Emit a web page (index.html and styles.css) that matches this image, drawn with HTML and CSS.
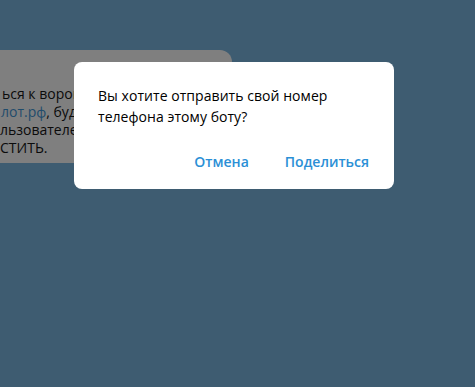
FILE: index.html
```html
<!DOCTYPE html>
<html lang="ru">
<head>
    <meta charset="UTF-8">
    <meta name="viewport" content="width=device-width, initial-scale=1.0">
    <title>Поделиться номером</title>
    <link rel="stylesheet" href="styles.css">
</head>
<body>
    <div class="chat">
        <div class="bubble">
            <div class="line l1">ься к воронке</div>
            <div class="line l2"><span class="link">лот.рф</span>, будет</div>
            <div class="line l3">льзователей</div>
            <div class="line l4">СТИТЬ.</div>
        </div>
    </div>

    <div class="dialog">
        <p class="dialog-text">Вы хотите отправить свой номер<br>телефона этому боту?</p>
        <div class="dialog-buttons">
            <button class="dialog-btn">Отмена</button>
            <button class="dialog-btn">Поделиться</button>
        </div>
    </div>
</body>
</html>
```

FILE: styles.css
```css
body {
    margin: 0;
    height: 387px;
    background-color: #3e5c71;
    font-family: "Open Sans", "DejaVu Sans", sans-serif;
    overflow: hidden;
    position: relative;
}
.chat {
    padding-top: 50px;
}
.bubble {
    width: 232px;
    box-sizing: border-box;
    padding: 35px 0 6px 0;
    background-color: #7f7f7f;
    border-radius: 0 12px 12px 0;
    color: #0b0b0b;
    font-size: 14px;
    line-height: 18px;
    overflow: hidden;
}
.line {
    white-space: nowrap;
}
.l1 { margin-left: 2px; }
.l2 { margin-left: 1px; }
.l3 { margin-left: 0; }
.l4 { margin-left: 0; }
.link {
    color: #1f4c6c;
}
.dialog {
    position: absolute;
    left: 74px;
    top: 62px;
    width: 320px;
    height: 127px;
    box-sizing: border-box;
    padding: 23px 25px 0 24px;
    background-color: #fff;
    border-radius: 8px;
}
.dialog-text {
    margin: 0;
    font-size: 14px;
    line-height: 21px;
    letter-spacing: 0.05px;
    color: #000;
}
.dialog-buttons {
    display: flex;
    justify-content: flex-end;
    gap: 36px;
    margin-top: 25px;
}
.dialog-btn {
    border: none;
    background: none;
    padding: 0;
    font-family: inherit;
    font-size: 14px;
    font-weight: 600;
    line-height: 20px;
    color: #2b8fd6;
    cursor: pointer;
}
```
